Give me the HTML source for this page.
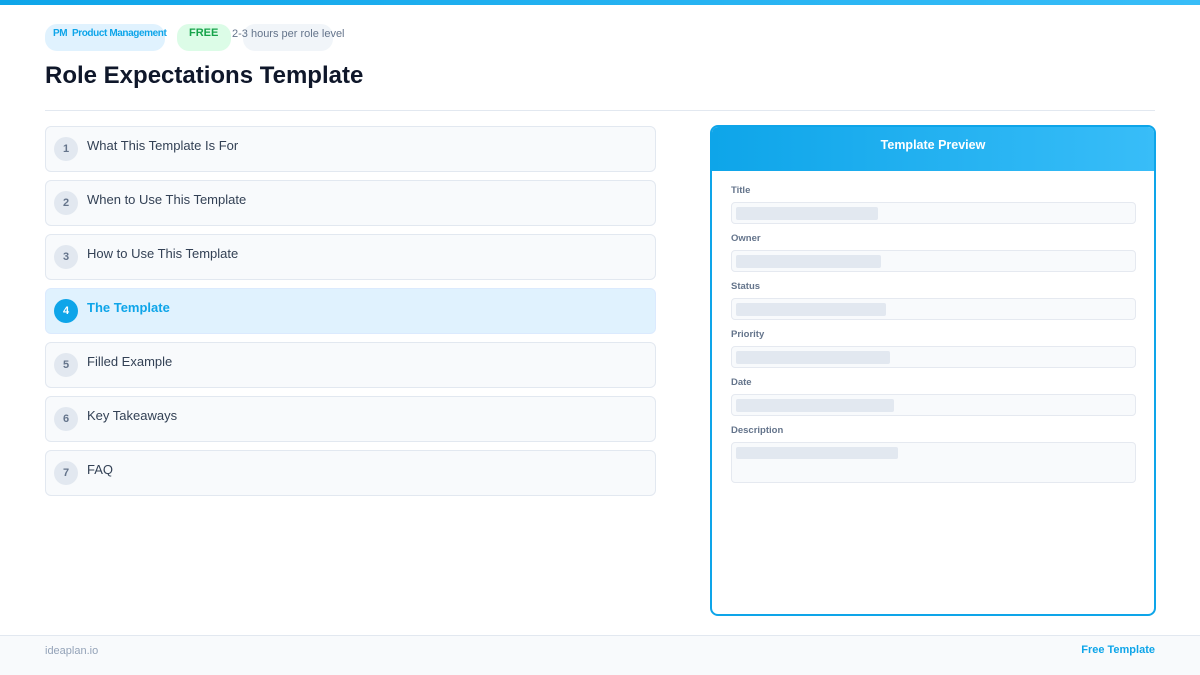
<!DOCTYPE html>
<html><head><meta charset="utf-8"><style>
*{margin:0;padding:0;box-sizing:border-box}
body{width:1200px;height:675px;background:#fff;font-family:"Liberation Sans",sans-serif;position:relative;overflow:hidden}
.abs{position:absolute}
.topbar{left:0;top:0;width:1200px;height:5px;background:linear-gradient(90deg,#0ea5e9,#38bdf8)}
.pill{position:absolute;top:24px;height:27px;border-radius:12px;font-size:11px;white-space:nowrap}
.item{position:absolute;left:45px;width:611px;height:46px;border:1px solid #e2e8f0;border-radius:6px;background:#f8fafc}
.item .n{position:absolute;left:8px;top:10px;width:24px;height:24px;border-radius:50%;background:#e2e8f0;color:#64748b;font-size:11px;font-weight:bold;text-align:center;line-height:24px}
.item .t{position:absolute;left:41px;top:11px;font-size:13px;color:#334155}
.item.a{background:#e0f2fe;border-color:#dbeafe}
.item.a .n{background:#0ea5e9;color:#fff}
.item.a .t{color:#0ea5e9;font-weight:bold}
.lbl{position:absolute;left:19px;font-size:9.5px;font-weight:bold;color:#64748b}
.fld{position:absolute;left:19px;width:405px;height:22px;border:1px solid #e5e9f0;border-radius:4px;background:#f8fafc}
.fld div{position:absolute;left:4px;top:4px;height:13px;background:#e2e8f0;border-radius:2px}
</style></head><body>
<div class="abs topbar"></div>
<div class="pill" style="left:45px;width:120px;background:#e0f2fe;color:#0ea5e9;font-weight:bold;font-size:10px;padding:4px 0 0 8px;letter-spacing:-0.4px">PM&nbsp; Product Management</div>
<div class="pill" style="left:177px;width:54px;background:#dcfce7;color:#16a34a;font-weight:bold;padding:3px 0 0 12px">FREE</div>
<div class="pill" style="left:243px;width:90px;background:#f1f5f9"></div>
<div class="abs" style="left:232px;top:28px;font-size:11px;color:#64748b">2-3 hours per role level</div>
<div class="abs" style="left:45px;top:62px;font-size:24px;font-weight:bold;color:#0f172a">Role Expectations Template</div>
<div class="abs" style="left:45px;top:110px;width:1110px;height:1px;background:#e2e8f0"></div>

<div class="item" style="top:126px"><div class="n">1</div><div class="t">What This Template Is For</div></div>
<div class="item" style="top:180px"><div class="n">2</div><div class="t">When to Use This Template</div></div>
<div class="item" style="top:234px"><div class="n">3</div><div class="t">How to Use This Template</div></div>
<div class="item a" style="top:288px"><div class="n">4</div><div class="t">The Template</div></div>
<div class="item" style="top:342px"><div class="n">5</div><div class="t">Filled Example</div></div>
<div class="item" style="top:396px"><div class="n">6</div><div class="t">Key Takeaways</div></div>
<div class="item" style="top:450px"><div class="n">7</div><div class="t">FAQ</div></div>

<div class="abs" style="left:710px;top:125px;width:446px;height:491px;border:2px solid #0ea5e9;border-radius:8px;overflow:hidden">
 <div style="height:44px;background:linear-gradient(90deg,#0ea5e9,#38bdf8);color:#fff;font-weight:bold;font-size:12.5px;text-align:center;line-height:36px">Template Preview</div>
 <div class="lbl" style="top:58px">Title</div><div class="fld" style="top:75px"><div style="width:142px"></div></div>
 <div class="lbl" style="top:106px">Owner</div><div class="fld" style="top:123px"><div style="width:145px"></div></div>
 <div class="lbl" style="top:154px">Status</div><div class="fld" style="top:171px"><div style="width:150px"></div></div>
 <div class="lbl" style="top:202px">Priority</div><div class="fld" style="top:219px"><div style="width:154px"></div></div>
 <div class="lbl" style="top:250px">Date</div><div class="fld" style="top:267px"><div style="width:158px"></div></div>
 <div class="lbl" style="top:298px">Description</div><div class="fld" style="top:315px;height:41px"><div style="width:162px;height:12px"></div></div>
</div>

<div class="abs" style="left:0;top:635px;width:1200px;height:40px;background:#f8fafc;border-top:1px solid #e2e8f0"></div>
<div class="abs" style="left:45px;top:645px;font-size:11px;color:#94a3b8">ideaplan.io</div>
<div class="abs" style="right:45px;top:644px;font-size:11px;color:#0ea5e9;font-weight:bold">Free Template</div>
</body></html>
